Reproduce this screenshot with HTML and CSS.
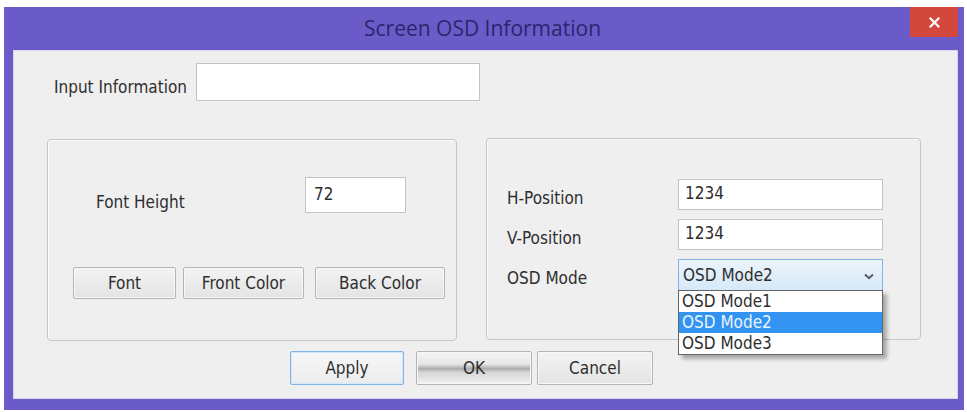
FILE: index.html
```html
<!DOCTYPE html>
<html lang="en">
<head>
  <meta charset="UTF-8" />
  <meta name="viewport" content="width=device-width, initial-scale=1.0"/>
  <title>Screen OSD Information</title>
  <link rel="stylesheet" href="styles.css">
</head>
<body>
  <div class="window">
    <div class="titlebar">
      <span class="title">Screen OSD Information</span>
      <span class="close">
        <svg width="11" height="11" viewBox="0 0 11 11"><path d="M1.5 1.5 L9.5 9.5 M9.5 1.5 L1.5 9.5" stroke="#fff" stroke-width="2.2" stroke-linecap="square"/></svg>
      </span>
    </div>

    <div class="content">
      <div class="input-row">
        <span class="label info-label">Input Information</span>
        <div class="field info-field"></div>
      </div>

      <div class="groups">
        <div class="group group-left">
          <div class="height-row">
            <span class="label height-label">Font Height</span>
            <div class="field height-field">72</div>
          </div>
          <div class="btn-row">
            <button class="btn btn-font">Font</button>
            <button class="btn btn-front">Front Color</button>
            <button class="btn btn-back">Back Color</button>
          </div>
        </div>

        <div class="group group-right">
          <div class="pos-grid">
            <span class="label">H-Position</span>
            <div class="field pos-field">1234</div>
            <span class="label">V-Position</span>
            <div class="field pos-field">1234</div>
            <span class="label">OSD Mode</span>
            <div class="combo">
              <span>OSD Mode2</span>
              <svg class="chevron" width="10" height="7" viewBox="0 0 10 7"><path d="M1 1.5 L5 5.2 L9 1.5" fill="none" stroke="#555" stroke-width="1.8"/></svg>
              <ul class="combo-list">
                <li>OSD Mode1</li>
                <li class="selected">OSD Mode2</li>
                <li>OSD Mode3</li>
              </ul>
            </div>
          </div>
        </div>
      </div>

      <div class="actions">
        <button class="btn btn-apply">Apply</button>
        <button class="btn btn-ok">OK</button>
        <button class="btn btn-cancel">Cancel</button>
      </div>
    </div>
  </div>
</body>
</html>
```

FILE: styles.css
```css
body {
  margin: 0;
  background: #fff;
  font-family: "DejaVu Sans Condensed", "DejaVu Sans", sans-serif;
  font-stretch: condensed;
  color: #2e2e2e;
}

.window {
  margin: 7px 0 0 4px;
  width: 960px;
  height: 403px;
  box-sizing: border-box;
  padding: 0 7px 12px 10px;
  background: #6b5bc9;
  display: flex;
  flex-direction: column;
}

.titlebar {
  position: relative;
  height: 44px;
  display: flex;
  align-items: center;
  justify-content: center;
}

.title {
  font-family: "Open Sans", sans-serif;
  font-stretch: normal;
  font-size: 21px;
  color: #2a266c;
  margin: -3px 0 0 -6px;
}

.close {
  position: absolute;
  top: 0;
  right: -1px;
  width: 48px;
  height: 30px;
  background: #d2483d;
  display: flex;
  align-items: center;
  justify-content: center;
}

.content {
  flex: 1;
  background: #efefef;
  box-shadow: 0 0 0 1px #d8d2f2;
}

.label {
  font-size: 17px;
}

.field {
  box-sizing: border-box;
  background: #fff;
  border: 1px solid #c3c3c3;
  font-size: 17px;
  padding: 5px 6px;
}

.input-row {
  display: flex;
  align-items: center;
  margin: 12px 0 0 40px;
}

.info-label {
  width: 142px;
  margin-top: 10px;
}

.info-field {
  width: 284px;
  height: 38px;
}

.groups {
  display: flex;
  gap: 29px;
  margin: 38px 0 0 33px;
}

.group {
  box-sizing: border-box;
  height: 202px;
  border: 1px solid #c6c6c6;
  border-radius: 4px;
  box-shadow: inset 1px 1px 0 #fafafa;
}

.group-left {
  width: 410px;
  padding: 37px 0 0 25px;
}

.height-row {
  display: flex;
  align-items: center;
}

.height-label {
  width: 209px;
  margin: 14px 0 0 23px;
}

.height-field {
  width: 101px;
  height: 36px;
  padding: 6px 8px;
}

.btn-row {
  display: flex;
  margin-top: 54px;
}

.btn {
  box-sizing: border-box;
  height: 32px;
  font-family: inherit;
  font-size: 17px;
  color: #2e2e2e;
  background: linear-gradient(#f3f3f3, #e4e4e4);
  border: 1px solid #b4b4b4;
  border-radius: 2px;
  box-shadow: inset 0 0 0 1px #f8f8f8;
  padding: 0;
}

.btn-font { width: 103px; }
.btn-front { width: 121px; margin-left: 7px; }
.btn-back { width: 130px; margin-left: 11px; }

.group-right {
  width: 435px;
  margin-top: -1px;
  padding: 40px 0 0 20px;
}

.pos-grid {
  display: grid;
  grid-template-columns: 171px 205px;
  grid-template-rows: 31px 31px 32px;
  row-gap: 9px;
  align-items: center;
}

.pos-grid .label {
  padding-top: 6px;
}

.pos-field {
  height: 31px;
  padding: 3px 6px;
}

.combo {
  position: relative;
  box-sizing: border-box;
  height: 32px;
  border: 1px solid #7eb4ea;
  background: linear-gradient(#ecf4fc, #d6e9f8);
  display: flex;
  align-items: center;
  justify-content: space-between;
  padding: 0 8px 0 4px;
  font-size: 17px;
}

.chevron {
  margin-top: 2px;
}

.combo-list {
  position: absolute;
  top: 30px;
  left: -1px;
  width: 205px;
  box-sizing: border-box;
  margin: 0;
  padding: 0;
  list-style: none;
  background: #fff;
  border: 1px solid #646464;
  box-shadow: 4px 4px 4px rgba(0, 0, 0, 0.3);
}

.combo-list li {
  height: 21px;
  line-height: 21px;
  padding-left: 3px;
  font-size: 17px;
}

.combo-list .selected {
  background: #3393f0;
  color: #e8f3ff;
}

.actions {
  display: flex;
  margin: 10px 0 0 276px;
}

.actions .btn {
  height: 34px;
}

.btn-apply {
  width: 114px;
  border-color: #7eb4ea;
  box-shadow: inset 0 0 0 1px #d5e8f8;
  background: linear-gradient(#f7f7f7, #ececec);
}

.btn-ok {
  width: 116px;
  margin-left: 12px;
  background: linear-gradient(#f4f4f4 0%, #e6e6e6 38%, #ababab 52%, #d6d6d6 64%, #f2f2f2 100%);
}

.btn-cancel {
  width: 116px;
  margin-left: 5px;
}
```
